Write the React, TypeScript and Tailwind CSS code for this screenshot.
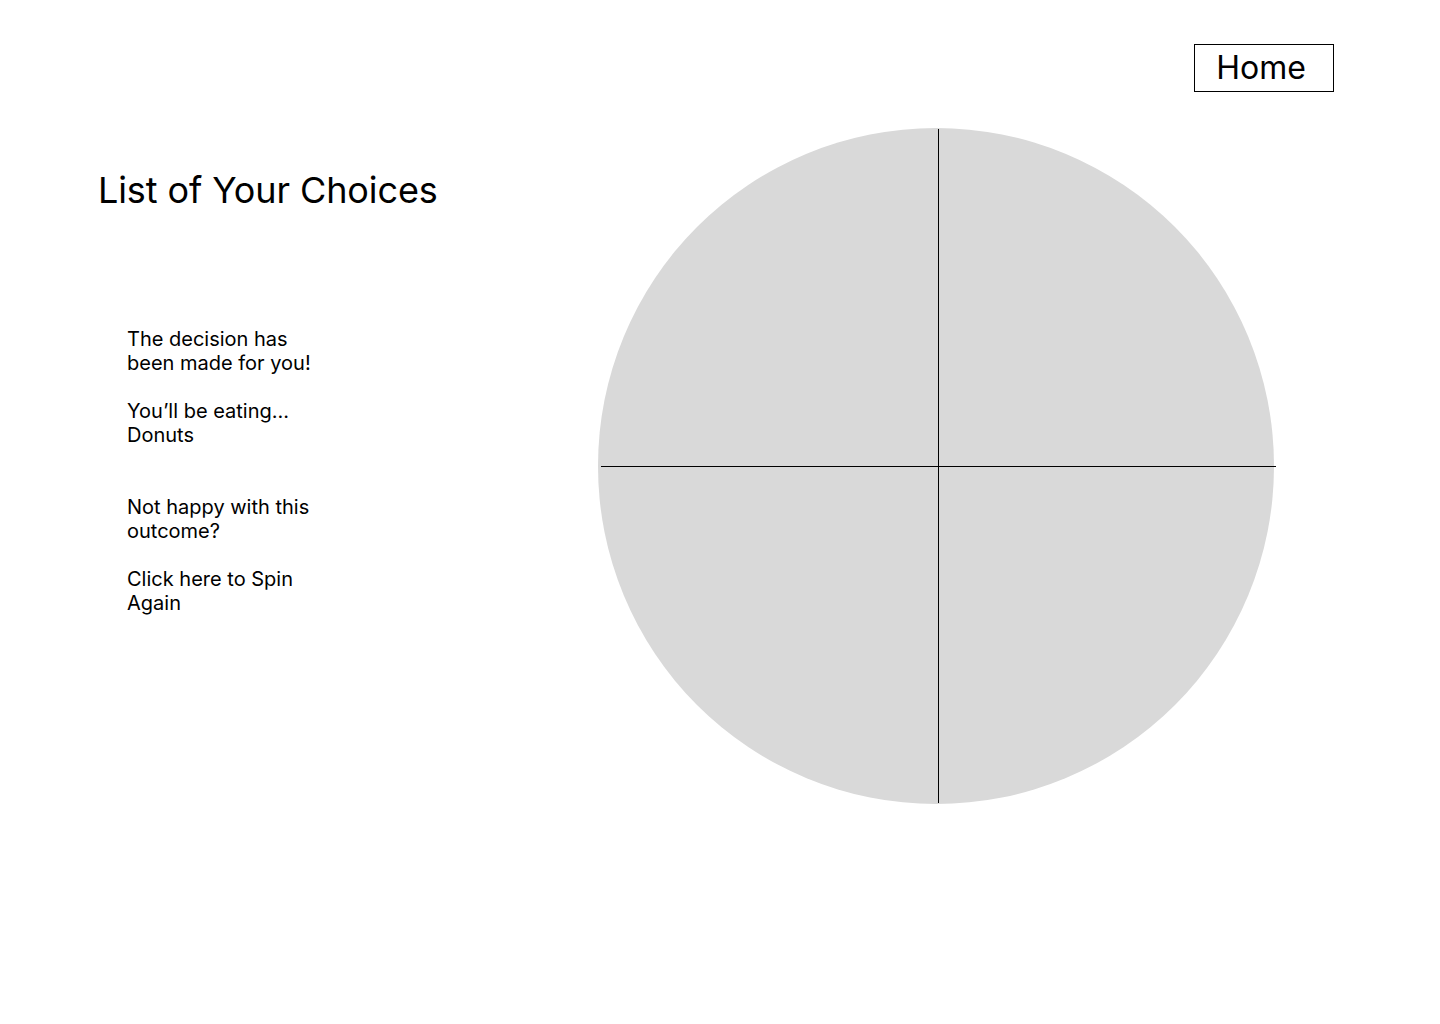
import * as React from 'react';

const Wheel: React.FunctionComponent = () => {
    return (
        <svg width="676" height="676" viewBox="0 0 676 676" className="overflow-visible shrink-0">
            <circle cx="338" cy="338" r="338" fill="#d9d9d9" />
            <line x1="340.5" y1="1" x2="340.5" y2="675" stroke="#000" strokeWidth="1" />
            <line x1="3" y1="338.5" x2="678" y2="338.5" stroke="#000" strokeWidth="1" />
        </svg>
    );
};

const App: React.FunctionComponent = () => {
    return (
        <div className="w-full h-[1024px] bg-white text-black" style={{ fontFamily: 'Inter, "Noto Sans", sans-serif' }}>
            <div className="flex justify-end pt-[44px] pr-[106px]">
                <button className="w-[140px] h-[48px] border border-black text-[32px] leading-none font-normal flex items-center justify-center pr-[6px]">
                    Home
                </button>
            </div>
            <div className="flex mt-[36px]">
                <div className="w-[598px] shrink-0 pl-[98px]">
                    <h1 className="mt-[40px] text-[36px] leading-[44px] font-normal tracking-[-0.1px]">List of Your Choices</h1>
                    <div className="mt-[115px] ml-[29px] w-[200px] text-[20px] leading-[24px]">
                        <p>The decision has been made for you!</p>
                        <p className="mt-[24px]">You’ll be eating... Donuts</p>
                        <p className="mt-[48px]">Not happy with this outcome?</p>
                        <p className="mt-[24px] cursor-pointer">Click here to Spin Again</p>
                    </div>
                </div>
                <Wheel />
            </div>
        </div>
    );
};

export default App;
